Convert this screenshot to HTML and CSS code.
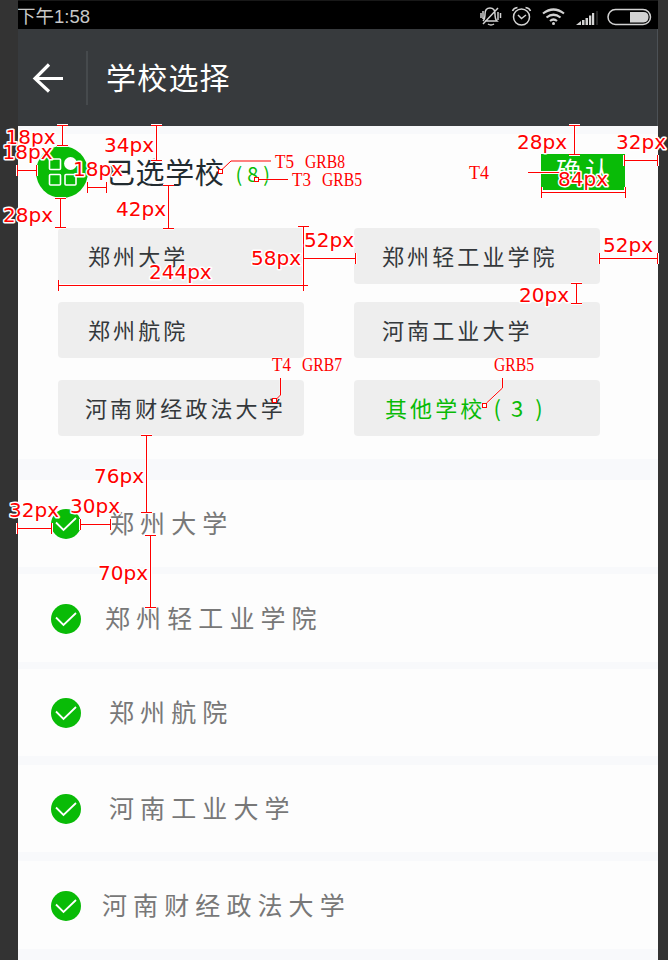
FILE: index.html
```html
<!DOCTYPE html>
<html lang="zh-CN">
<head>
<meta charset="utf-8">
<title>学校选择</title>
<link rel="stylesheet" href="styles.css">
</head>
<body>
<main class="screen">
  <div class="status">
    <span class="time">下午1:58</span>
    <svg class="status-icons" width="180" height="29" viewBox="478 0 180 29" fill="none" stroke="#d2d2d2" stroke-width="1.5">
      <path d="M485 21h12c-2-2-2-4-2-7 0-4-1-6-5-6s-5 2-5 6c0 3 0 5-2 7M488 24q3 2 6 0M483 24L498 8M481 13v5M483 11v8M498 12v8M500.500 13v5"/>
      <circle cx="521.500" cy="17" r="8"/>
      <path d="M518 15l3.500 3.500L526 15M512.500 11q1-3 5-3.500M530.500 11q-1-3-5-3.500"/>
      <path stroke-width="2.200" d="M543 13.500q10.500-8 21 0M546.500 17.500q7-5.500 14 0M550 21q3.500-3 7 0"/>
      <circle cx="553.500" cy="23.500" r="1.500" fill="#d2d2d2" stroke="none"/>
      <path stroke="none" fill="#d2d2d2" d="M576 25l5-4v4zM582 20h2.500v5H582zM585.500 18h2.500v7h-2.500zM589 15.500h2.300V25H589zM592 13h2.200v12H592z"/>
      <path stroke="#333" d="M597 11v14"/>
      <rect x="608" y="9.500" width="42.500" height="15" rx="7.500"/>
      <path stroke="none" fill="#d2d2d2" d="M630 12h13.500q5 0 5 5t-5 5.500H630z"/>
    </svg>
  </div>
  <header class="header">
    <svg class="back" width="32" height="32" viewBox="0 0 32 32" fill="none" stroke="#fff" stroke-width="3.200"><path d="M17 2.500L3 16.500l14 13M3 16.500h28"/></svg>
    <span class="divider"></span>
    <h1>学校选择</h1>
  </header>
  <section class="selected">
    <div class="selected-head">
      <svg class="badge" width="52" height="52" viewBox="0 0 52 52">
        <circle cx="26" cy="26" r="26" fill="#09bb07"/>
        <g fill="none" stroke="#fff" stroke-width="1.600"><rect x="13.500" y="13" width="11" height="10.500" rx="1"/><rect x="13.500" y="28.500" width="11" height="10.500" rx="1"/><rect x="29" y="28.500" width="11" height="10.500" rx="1"/></g>
        <circle cx="34.500" cy="17.500" r="6.500" fill="#fff"/>
      </svg>
      <h2>已选学校</h2>
      <span class="count">(8)</span>
      <button class="confirm">确认</button>
    </div>
    <div class="chips">
      <div class="chip">郑州大学</div>
      <div class="chip nudge">郑州轻工业学院</div>
      <div class="chip">郑州航院</div>
      <div class="chip nudge">河南工业大学</div>
      <div class="chip nudge">河南财经政法大学</div>
      <div class="chip other">其他学校<span class="paren">(</span><span class="num">3</span><span class="paren close">)</span></div>
    </div>
  </section>
  <ul class="list">
    <li class="row"><svg class="check" viewBox="0 0 30 30"><circle cx="15" cy="15" r="15"/><path d="M5 13.500l7.500 7.500L25 9"/></svg><span>郑州大学</span></li>
    <li class="row second"><svg class="check" viewBox="0 0 30 30"><circle cx="15" cy="15" r="15"/><path d="M5 13.500l7.500 7.500L25 9"/></svg><span>郑州轻工业学院</span></li>
    <li class="row third"><svg class="check" viewBox="0 0 30 30"><circle cx="15" cy="15" r="15"/><path d="M5 13.500l7.500 7.500L25 9"/></svg><span>郑州航院</span></li>
    <li class="row fourth"><svg class="check" viewBox="0 0 30 30"><circle cx="15" cy="15" r="15"/><path d="M5 13.500l7.500 7.500L25 9"/></svg><span>河南工业大学</span></li>
    <li class="row fifth"><svg class="check" viewBox="0 0 30 30"><circle cx="15" cy="15" r="15"/><path d="M5 13.500l7.500 7.500L25 9"/></svg><span>河南财经政法大学</span></li>
  </ul>
</main>
<svg class="specs" width="668" height="960" viewBox="0 0 668 960">
  <defs>
    <path id="rules" d="M57 125.500h11M62.500 125v20M57 145.500h11M17.500 165v11M17 170.500h20M36.500 165v11M87.500 182v11M87 187.500h20M106.500 182v11M55 198.500h11M60.500 198v29M55 227.500h11M151 125.500h11M156.500 125v35M151 160.500h11M163 185.500h11M168.500 185v43M163 228.500h11M569 125.500h11M574.500 125v29M569 154.500h11M624.500 155v11M624 160.500h33M657.500 155v11M541.500 187v11M541 192.500h84M625.500 187v11M528 172.500h33M58.500 280v11M58 285.500h250M298 226.500h11M303.500 226v65M303 258.500h52M355.500 253v11M599.500 253v11M599 258.500h58M657.500 253v11M571 283.500h11M576.500 283v20M571 303.500h11M141 435.500h11M146.500 435v77M141 512.500h11M145 535.500h11M150.500 535v72M145 607.500h11M17.500 523v11M17 528.500h35M51.500 523v11M80.500 519v11M80 524.500h30M110.500 519v11"/>
    <path id="leaders" d="M222 169.500l9-8.500h40M258 179.500h30M280.500 378v17l-4 4M502.500 378v10l-16 15"/>
  </defs>
  <use href="#rules" class="halo"/><use href="#leaders" class="halo thin"/>
  <use href="#rules" class="ink"/><use href="#leaders" class="ink"/>
  <g class="pins"><rect x="218.500" y="169.500" width="4" height="4"/><rect x="254.500" y="177.500" width="4" height="4"/><rect x="272.500" y="398.500" width="4" height="4"/><rect x="482.500" y="403.500" width="4" height="4"/></g>
  <g class="sizes">
    <text x="5.500" y="144">18px</text><text x="2.500" y="159">18px</text><text x="73" y="176">18px</text>
    <text x="104" y="152">34px</text><text x="3" y="222">28px</text><text x="116" y="216">42px</text>
    <text x="517" y="149">28px</text><text x="616" y="149">32px</text><text x="558" y="186">84px</text>
    <text x="149" y="279">244px</text><text x="251" y="265">58px</text><text x="304" y="247">52px</text>
    <text x="603" y="252">52px</text><text x="519" y="302">20px</text><text x="94" y="483">76px</text>
    <text x="9" y="517">32px</text><text x="70" y="513">30px</text><text x="98" y="580">70px</text>
  </g>
  <g class="notes">
    <text x="275" y="168" textLength="19" lengthAdjust="spacingAndGlyphs">T5</text><text x="305" y="168" textLength="40" lengthAdjust="spacingAndGlyphs">GRB8</text>
    <text x="292" y="186" textLength="19" lengthAdjust="spacingAndGlyphs">T3</text><text x="322" y="186" textLength="40" lengthAdjust="spacingAndGlyphs">GRB5</text>
    <text x="469" y="179" textLength="20" lengthAdjust="spacingAndGlyphs">T4</text>
    <text x="272" y="371" textLength="19" lengthAdjust="spacingAndGlyphs">T4</text><text x="302" y="371" textLength="40" lengthAdjust="spacingAndGlyphs">GRB7</text>
    <text x="494" y="371" textLength="40" lengthAdjust="spacingAndGlyphs">GRB5</text>
  </g>
</svg>
</body>
</html>
```
FILE: styles.css
```css
* { box-sizing: border-box; }
body {
  margin: 0;
  width: 668px;
  height: 960px;
  overflow: hidden;
  background: #333;
  font-family: "Noto Sans CJK SC", sans-serif;
}
h1, h2, ul { margin: 0; padding: 0; font-weight: 400; }
.screen {
  width: 640px;
  height: 960px;
  margin-left: 18px;
  background: #f8f9fb;
  overflow: hidden;
}
.status {
  height: 29px;
  background: #000;
  border-top: 1px solid #181818;
  display: flex;
  justify-content: space-between;
}
.time {
  color: #c8c8c8;
  font: 18.500px/31px "Liberation Sans", "Noto Sans CJK SC", sans-serif;
  white-space: nowrap;
  margin-left: -1px;
}
.status-icons { margin-top: -1px; }
.header {
  height: 97px;
  background: #373a3d;
  border-right: 1px solid #4c5156;
  display: flex;
  align-items: center;
  padding-left: 14px;
}
.back { display: block; }
.divider { width: 2px; height: 54px; margin: 0 18px 0 22px; background: #464a4d; }
h1 { margin-bottom: 3px; color: #fff; font-size: 30px; line-height: 40px; letter-spacing: 1.200px; }
.selected {
  height: 325px;
  margin-top: 8px;
  padding: 12px 58px 0 18px;
  background: #fdfdfd;
}
.selected-head { display: flex; height: 52px; width: 589px; align-items: center; }
h2 { margin: 0 0 2px 18px; color: #222b30; font-size: 29px; line-height: 40px; letter-spacing: .600px; }
.count {
  margin: 3px 0 0 11px;
  color: #09bb07;
  font: 20px/30px "Noto Sans CJK SC", sans-serif;
  letter-spacing: 5px;
}
.confirm {
  width: 84px;
  height: 36px;
  margin: 0 0 1px auto;
  padding: 0 0 5px 4px;
  border: 0;
  background: #09bb07;
  color: #fff;
  font: 25px/30px "Noto Sans CJK SC", sans-serif;
  letter-spacing: 4px;
}
.chips {
  display: grid;
  grid-template-columns: 246px 246px;
  grid-template-rows: 56px 56px 56px;
  column-gap: 50px;
  row-gap: 18px;
  margin: 30px 0 0 22px;
}
.chip {
  border-radius: 4px;
  background: #eee;
  color: #34383b;
  font-size: 22px;
  line-height: 54px;
  letter-spacing: 3.100px;
  padding-left: 30px;
  white-space: nowrap;
}
.chip.nudge { padding-left: 28px; }
.chip:nth-child(n+5) { margin: 4px 0 -4px; }
.chip.nudge:nth-child(5) { padding-left: 27px; }
.chip.other { padding-left: 31px; color: #09bb07; }
.paren { margin-left: 8px; }
.num { margin-left: 7px; }
.paren.close { margin-left: 9px; }
.list { margin-top: 21px; list-style: none; }
.row {
  display: flex;
  align-items: center;
  height: 87px;
  padding-left: 33px;
  background: #fdfdfd;
  color: #787878;
  font-size: 25px;
  line-height: 36px;
  letter-spacing: 6.100px;
  white-space: nowrap;
}
.row span { margin: 0 0 3px 28px; }
.check { width: 30px; height: 30px; }
.check circle { fill: #09bb07; }
.check path { fill: none; stroke: #fff; stroke-width: 1.800; }
.row.second { margin-top: 7px; height: 88px; }
.row.second span { margin-left: 24px; }
.row.second .check, .row.fifth .check { margin-top: 2px; }
.row.third { margin-top: 7px; }
.row.fourth { margin-top: 9px; }
.row.fifth { margin-top: 9px; height: 88px; }
.row.fifth span { margin-left: 21px; }
.specs { position: absolute; left: 0; top: 0; }
.halo { fill: none; stroke: #fff; stroke-width: 3; }
.halo.thin { stroke-width: 2; stroke-opacity: .6; }
.ink { fill: none; stroke: #f00; stroke-width: 1; }
.pins { fill: #fff; stroke: #f00; }
.sizes, .notes { fill: #f00; stroke: #fff; stroke-width: 3px; stroke-linejoin: round; paint-order: stroke; }
.sizes { font: 20px "DejaVu Sans", sans-serif; }
.notes { font: 19px "Liberation Serif", serif; stroke-width: 1px; }
```
